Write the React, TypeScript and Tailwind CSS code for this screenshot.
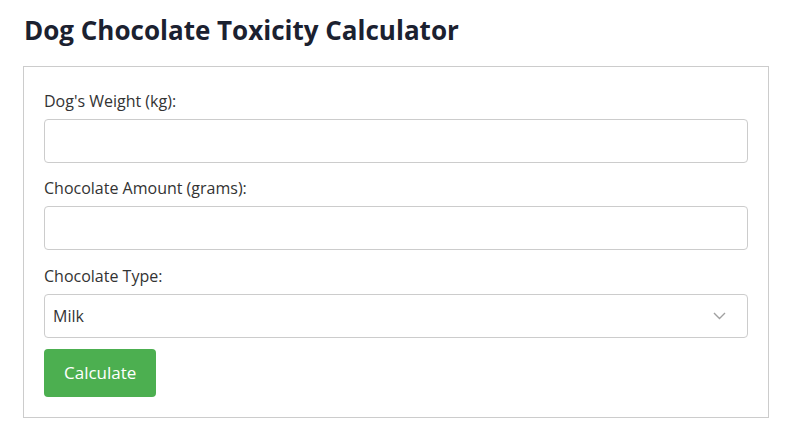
import { useState } from 'react';

const font = { fontFamily: '"Open Sans", "Noto Sans", sans-serif' };

function Field({ label, children }: { label: string; children: React.ReactNode }) {
  return (
    <div>
      <label className="block text-[16px] leading-[22px] text-[#333] mb-[7px]">{label}</label>
      {children}
    </div>
  );
}

export default function App() {
  const [weight, setWeight] = useState('');
  const [amount, setAmount] = useState('');
  const [type, setType] = useState('milk');

  return (
    <div className="min-h-screen bg-white pt-[13px] pl-[23px]" style={font}>
      <h1 className="text-[26px] leading-[34px] font-bold text-[#1b2130] mb-[19px] pl-[1px]">
        Dog Chocolate Toxicity Calculator
      </h1>
      <div className="w-[746px] border border-[#cccccc] px-5 pt-[23px] pb-5">
        <Field label="Dog's Weight (kg):">
          <input
            type="number"
            value={weight}
            onChange={(e) => setWeight(e.target.value)}
            className="block w-full h-[44px] border border-[#cccccc] rounded-[4px] px-2 mb-[14px] text-[16px] text-[#333] outline-none"
          />
        </Field>
        <Field label="Chocolate Amount (grams):">
          <input
            type="number"
            value={amount}
            onChange={(e) => setAmount(e.target.value)}
            className="block w-full h-[44px] border border-[#cccccc] rounded-[4px] px-2 mb-[15px] text-[16px] text-[#333] outline-none"
          />
        </Field>
        <Field label="Chocolate Type:">
          <div className="relative mb-[11px]">
            <select
              value={type}
              onChange={(e) => setType(e.target.value)}
              className="block w-full h-[44px] appearance-none border border-[#cccccc] rounded-[4px] pl-2 pr-10 text-[16px] text-[#333] bg-white outline-none"
            >
              <option value="milk">Milk</option>
              <option value="dark">Dark</option>
              <option value="white">White</option>
              <option value="baking">Baking</option>
            </select>
            <svg
              className="absolute right-[22px] top-1/2 -translate-y-1/2 pointer-events-none"
              width="13"
              height="8"
              viewBox="0 0 13 8"
              fill="none"
            >
              <path d="M1 1l5.5 5.5L12 1" stroke="#a0a0a0" strokeWidth="1.4" />
            </svg>
          </div>
        </Field>
        <button className="h-[48px] px-[20px] rounded-[4px] bg-[#4caf50] text-white text-[17px]">
          Calculate
        </button>
      </div>
    </div>
  );
}
